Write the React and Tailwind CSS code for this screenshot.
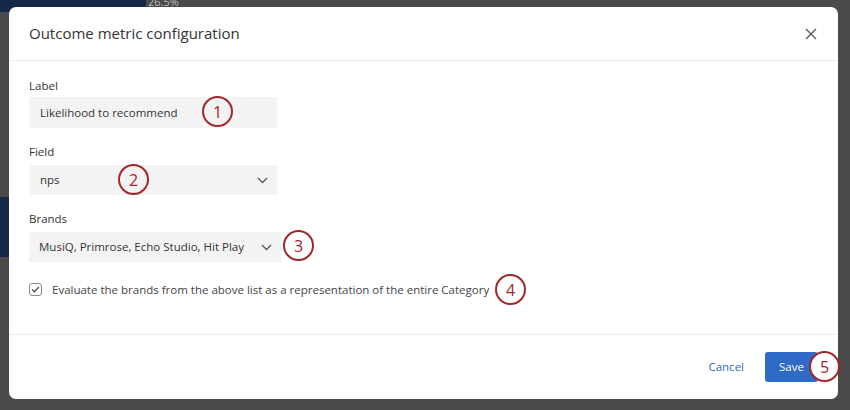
import React from "react";

function Badge({ n, className }) {
  return (
    <div
      className={
        "absolute flex h-[31px] w-[31px] items-center justify-center rounded-full border-[2.5px] border-[#a3262b] text-[16px] text-[#a3262b] " +
        className
      }
    >
      {n}
    </div>
  );
}

function Chevron() {
  return (
    <svg width="11" height="7" viewBox="0 0 11 7" fill="none" className="shrink-0">
      <path d="M1 1l4.5 4.5L10 1" stroke="#555" strokeWidth="1.3" />
    </svg>
  );
}

export default function App() {
  return (
    <div
      className="relative h-[410px] w-[850px] overflow-hidden bg-[#4a4a4a]"
      style={{ fontFamily: '"Open Sans", "Noto Sans", sans-serif' }}
    >
      <div className="absolute left-0 top-0 h-[12px] w-[146px] bg-[#15284a]" />
      <div className="absolute left-0 top-[197px] h-[60px] w-[9px] bg-[#15284a]" />
      <div className="absolute left-[148px] top-[-5px] text-[11px] leading-[14px] text-[#bbb]">26.5%</div>

      <div className="relative ml-[9px] mt-[7px] flex h-[392px] w-[829px] flex-col rounded-[7px] bg-white">
        <div className="flex h-[54px] shrink-0 items-center justify-between border-b border-[#ececec] pl-[20px] pr-[20px]">
          <div className="text-[15px] text-[#333]">Outcome metric configuration</div>
          <svg width="12" height="12" viewBox="0 0 12 12" className="mr-[1px]">
            <path d="M1 1l10 10M11 1L1 11" stroke="#555" strokeWidth="1.3" />
          </svg>
        </div>

        <div className="flex flex-1 flex-col pl-[20px] pt-[16px]">
          <div className="text-[11.5px] leading-[18px] text-[#333]">Label</div>
          <div className="mt-[2px] flex h-[31px] w-[248px] items-center bg-[#f3f3f3] pl-[11px] text-[11.5px] text-[#333]">
            Likelihood to recommend
          </div>

          <div className="mt-[15px] text-[11.5px] leading-[18px] text-[#333]">Field</div>
          <div className="mt-[4px] flex h-[30px] w-[248px] items-center justify-between bg-[#f3f3f3] pl-[11px] pr-[9px] text-[11.5px] text-[#333]">
            <span>nps</span>
            <Chevron />
          </div>

          <div className="mt-[15px] text-[11.5px] leading-[18px] text-[#333]">Brands</div>
          <div className="mt-[4px] flex h-[30px] w-[252px] items-center justify-between bg-[#f3f3f3] pl-[10px] pr-[9px] text-[11.5px] text-[#333]">
            <span className="whitespace-nowrap">MusiQ, Primrose, Echo Studio, Hit Play</span>
            <Chevron />
          </div>

          <div className="mt-[19px] flex items-center">
            <div className="flex h-[13px] w-[13px] items-center justify-center rounded-[3px] border border-[#8a8a8a]">
              <svg width="9" height="7" viewBox="0 0 9 7" fill="none">
                <path d="M1 3.5l2.3 2.3L8 1" stroke="#555" strokeWidth="1.3" />
              </svg>
            </div>
            <span className="ml-[10px] text-[11.5px] text-[#444]">
              Evaluate the brands from the above list as a representation of the entire Category
            </span>
          </div>
        </div>

        <div className="flex h-[65px] shrink-0 items-center justify-end border-t border-[#ececec] pr-[20px]">
          <span className="mr-[21px] text-[11.5px] text-[#2f67c2]">Cancel</span>
          <div className="flex h-[30px] w-[53px] items-center justify-center rounded-[3px] bg-[#2e6ac6] text-[11.5px] text-white">
            Save
          </div>
        </div>

        <Badge n="1" className="left-[193px] top-[89px]" />
        <Badge n="2" className="left-[109px] top-[157px]" />
        <Badge n="3" className="left-[274px] top-[223px]" />
        <Badge n="4" className="left-[486px] top-[267px]" />
        <Badge n="5" className="left-[800px] top-[344px] bg-white" />
      </div>
    </div>
  );
}
